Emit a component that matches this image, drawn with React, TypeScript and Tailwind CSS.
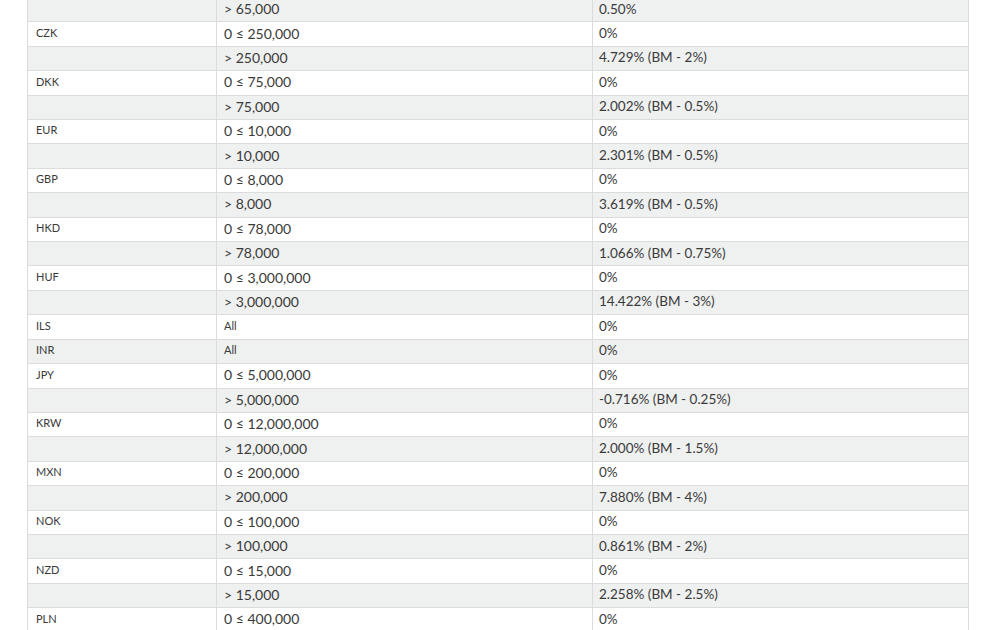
import * as React from "react";

type Row = { ccy?: string; range: string; rate: string; small?: boolean };

const rows: Row[] = [
  { range: "> 65,000", rate: "0.50%" },
  { ccy: "CZK", range: "0 ≤ 250,000", rate: "0%" },
  { range: "> 250,000", rate: "4.729% (BM - 2%)" },
  { ccy: "DKK", range: "0 ≤ 75,000", rate: "0%" },
  { range: "> 75,000", rate: "2.002% (BM - 0.5%)" },
  { ccy: "EUR", range: "0 ≤ 10,000", rate: "0%" },
  { range: "> 10,000", rate: "2.301% (BM - 0.5%)" },
  { ccy: "GBP", range: "0 ≤ 8,000", rate: "0%" },
  { range: "> 8,000", rate: "3.619% (BM - 0.5%)" },
  { ccy: "HKD", range: "0 ≤ 78,000", rate: "0%" },
  { range: "> 78,000", rate: "1.066% (BM - 0.75%)" },
  { ccy: "HUF", range: "0 ≤ 3,000,000", rate: "0%" },
  { range: "> 3,000,000", rate: "14.422% (BM - 3%)" },
  { ccy: "ILS", range: "All", rate: "0%", small: true },
  { ccy: "INR", range: "All", rate: "0%", small: true },
  { ccy: "JPY", range: "0 ≤ 5,000,000", rate: "0%" },
  { range: "> 5,000,000", rate: "-0.716% (BM - 0.25%)" },
  { ccy: "KRW", range: "0 ≤ 12,000,000", rate: "0%" },
  { range: "> 12,000,000", rate: "2.000% (BM - 1.5%)" },
  { ccy: "MXN", range: "0 ≤ 200,000", rate: "0%" },
  { range: "> 200,000", rate: "7.880% (BM - 4%)" },
  { ccy: "NOK", range: "0 ≤ 100,000", rate: "0%" },
  { range: "> 100,000", rate: "0.861% (BM - 2%)" },
  { ccy: "NZD", range: "0 ≤ 15,000", rate: "0%" },
  { range: "> 15,000", rate: "2.258% (BM - 2.5%)" },
  { ccy: "PLN", range: "0 ≤ 400,000", rate: "0%" },
];

export default function App() {
  return (
    <div className="h-[630px] overflow-hidden bg-white font-['Lato','Open_Sans',sans-serif] text-[#3a3a3a]">
      <div className="-mt-[3px] ml-[27px] w-[942px] border-x border-[#dcdcdc]">
        {rows.map((r, i) => (
          <div
            key={i}
            className={
              "grid h-[24.42px] grid-cols-[188px_376px_1fr] border-t border-[#dcdcdc] " +
              (i % 2 === 0 ? "bg-[#eff0f0]" : "bg-white")
            }
          >
            <div className="flex items-center pb-[2px] pl-[8px] text-[11px]">{r.ccy}</div>
            <div
              className={
                "flex items-center border-l border-[#dcdcdc] pb-[2px] pl-[7px] " +
                (r.small ? "text-[11px]" : "text-[14px]")
              }
            >
              {r.range}
            </div>
            <div className="flex items-center border-l border-[#dcdcdc] pb-[2px] pl-[6px] text-[13.5px]">
              {r.rate}
            </div>
          </div>
        ))}
      </div>
    </div>
  );
}
